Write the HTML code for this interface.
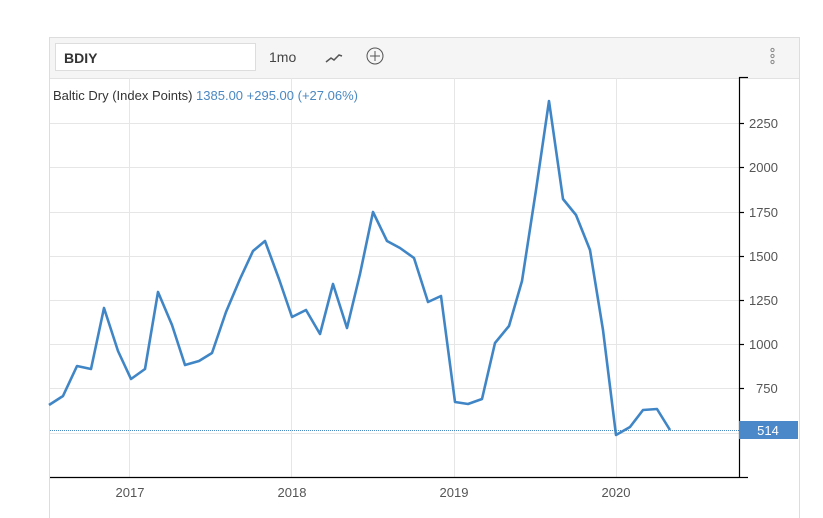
<!DOCTYPE html>
<html><head><style>
body{margin:0;width:823px;height:507px;background:#fff;overflow:hidden;font-family:"Liberation Sans",Arial,sans-serif;position:relative}
.box{position:absolute;left:49px;top:37px;width:749px;height:480px;border:1px solid #ddd;border-bottom:none}
.hdr{position:absolute;left:0;top:0;width:749px;height:40px;background:#f5f5f5;border-bottom:1px solid #e2e2e2}
.inp{position:absolute;left:5px;top:5px;height:28px;background:#fff;border:1px solid #ddd;font-weight:bold;font-size:14px;color:#333;line-height:29px;padding-left:8px;box-sizing:border-box;width:201px}
.t{position:absolute;font-size:13px;color:#444}
</style></head><body>
<div class="box"><div class="hdr">
<div class="inp">BDIY</div>
<div class="t" style="left:219px;top:11px;font-size:14px">1mo</div>
</div></div>
<svg width="823" height="507" style="position:absolute;left:0;top:0">
<g stroke="#e6e6e6" stroke-width="1">
<line x1="50" x2="739" y1="123.5" y2="123.5"/><line x1="50" x2="739" y1="167.5" y2="167.5"/><line x1="50" x2="739" y1="212.5" y2="212.5"/><line x1="50" x2="739" y1="256.5" y2="256.5"/><line x1="50" x2="739" y1="300.5" y2="300.5"/><line x1="50" x2="739" y1="344.5" y2="344.5"/><line x1="50" x2="739" y1="388.5" y2="388.5"/><line x1="50" x2="739" y1="433.5" y2="433.5"/>
<line x1="129.5" x2="129.5" y1="78" y2="477"/><line x1="291.5" x2="291.5" y1="78" y2="477"/><line x1="454.5" x2="454.5" y1="78" y2="477"/><line x1="616.5" x2="616.5" y1="78" y2="477"/>
</g>
<line x1="50" x2="739" y1="430.5" y2="430.5" stroke="#4a88c2" stroke-dasharray="1,1"/>
<g stroke="#000" stroke-width="1.2">
<line x1="50" x2="739" y1="477.5" y2="477.5"/><line x1="739.5" x2="739.5" y1="77" y2="478"/>
<line x1="739" x2="748" y1="77.5" y2="77.5"/><line x1="739" x2="748" y1="477.5" y2="477.5"/>
<line x1="739" x2="744" y1="123.5" y2="123.5"/><line x1="739" x2="744" y1="167.5" y2="167.5"/><line x1="739" x2="744" y1="212.5" y2="212.5"/><line x1="739" x2="744" y1="256.5" y2="256.5"/><line x1="739" x2="744" y1="300.5" y2="300.5"/><line x1="739" x2="744" y1="344.5" y2="344.5"/><line x1="739" x2="744" y1="388.5" y2="388.5"/>
</g>
<g font-family="Liberation Sans,Arial,sans-serif" font-size="13" fill="#555">
<text x="749" y="128">2250</text><text x="749" y="172">2000</text><text x="749" y="217">1750</text><text x="749" y="261">1500</text><text x="749" y="305">1250</text><text x="749" y="349">1000</text><text x="756" y="393">750</text>
<text x="130" y="497" text-anchor="middle">2017</text><text x="292" y="497" text-anchor="middle">2018</text><text x="454" y="497" text-anchor="middle">2019</text><text x="616" y="497" text-anchor="middle">2020</text>
</g>
<rect x="739" y="421" width="59" height="18" fill="#4a88c9"/>
<text x="768" y="435" text-anchor="middle" font-family="Liberation Sans,Arial,sans-serif" font-size="13" fill="#fff">514</text>
<text x="53" y="100" font-family="Liberation Sans,Arial,sans-serif" font-size="13" fill="#333">Baltic Dry (Index Points) <tspan fill="#4a88c2">1385.00  +295.00 (+27.06%)</tspan></text>
<polyline fill="none" stroke="#4086c6" stroke-width="2.6" stroke-linejoin="round" points="49,405 63,396 77,366 91,369 104,308 118,351 131,379 145,369 158,292 172,325 185,365 199,361 212,353 226,312 240,279 253,251 265,241 279,279 292,317 306,310 320,334 333,284 347,328 360,274 373,212 387,241 400,248 414,258 428,302 441,296 455,402 468,404 482,399 495,343 509,326 522,281 536,190 549,101 563,199 576,215 590,250 603,330 616,435 630,427 643,410 657,409 670,430"/>
<polyline fill="none" stroke="#555" stroke-width="1.5" points="326,62 331,58 334,60 339,55 342,56"/>
<circle cx="375" cy="56" r="8" fill="none" stroke="#555" stroke-width="1"/>
<path d="M375 51v10M370 56h10" stroke="#555" stroke-width="1"/>
<g fill="none" stroke="#888" stroke-width="1"><circle cx="772.5" cy="50" r="1.6"/><circle cx="772.5" cy="56" r="1.6"/><circle cx="772.5" cy="62" r="1.6"/></g>
</svg>
</body></html>
